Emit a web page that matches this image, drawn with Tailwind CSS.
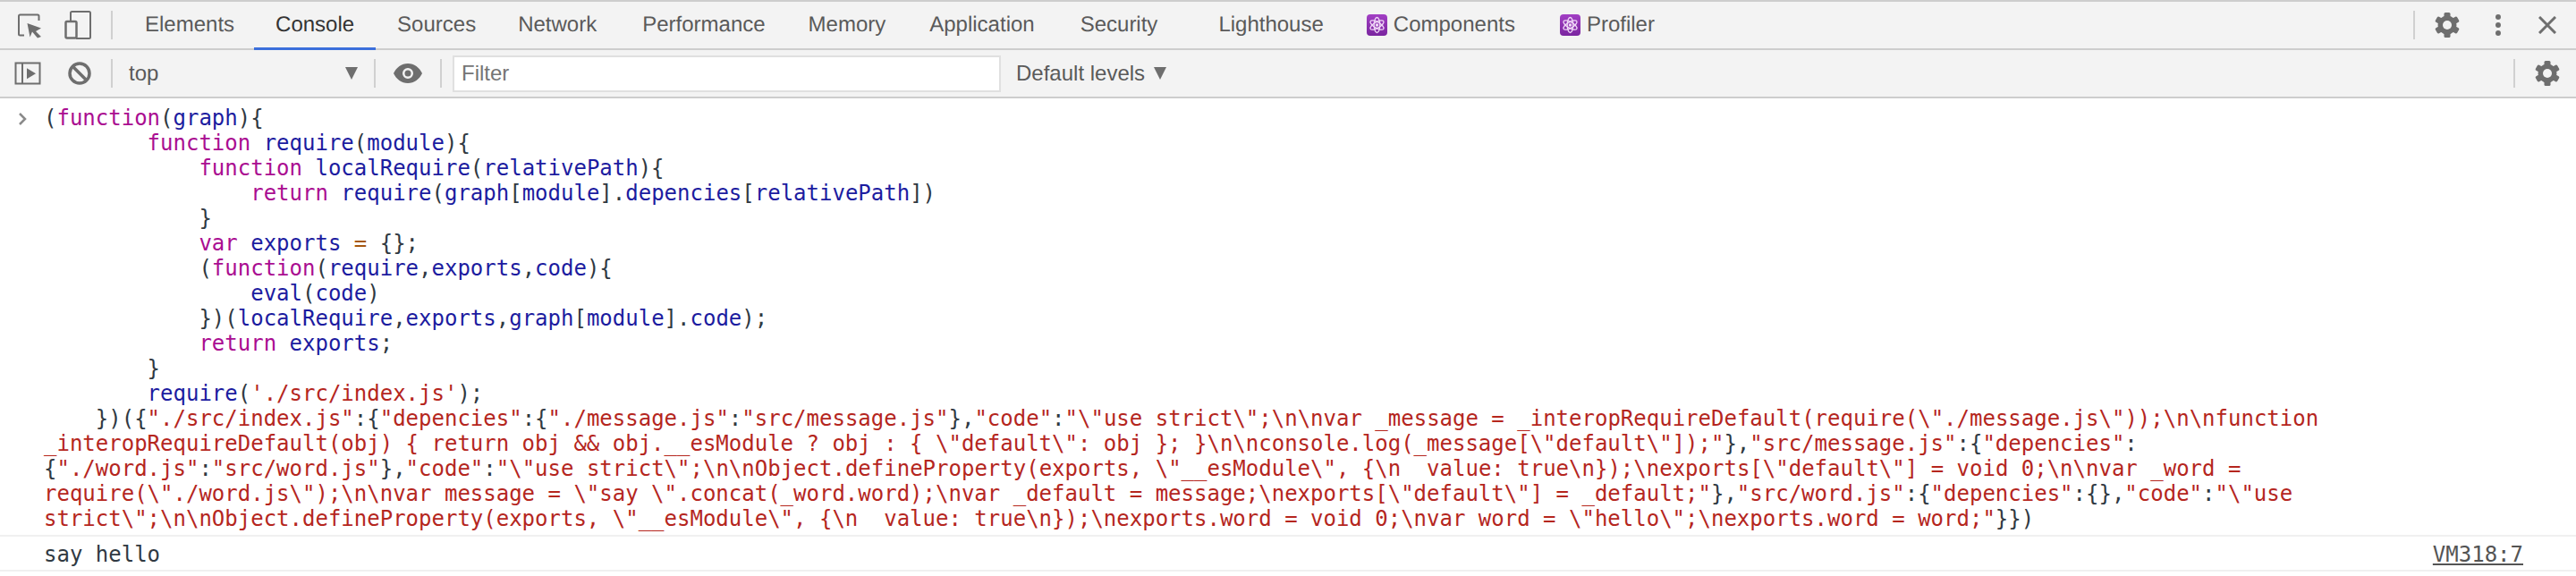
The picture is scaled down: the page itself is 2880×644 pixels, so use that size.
<!DOCTYPE html>
<html><head><meta charset="utf-8"><script src="https://cdn.jsdelivr.net/npm/@tailwindcss/browser@4"></script></head>
<body class="bg-white w-[2880px] h-[644px] overflow-hidden font-['Liberation_Sans',Arial,sans-serif]">
<div class="flex h-[56px] items-center bg-[#f3f3f3] border-y-[2px] border-[#cdcdcd] text-[24px] text-[#5a5a5a]">
  <svg class="w-[27px] h-[29px] ml-[20px] shrink-0" viewBox="20 14 27 29" fill="none"><path d="M27 39.500h-4.500a1.500 1.500 0 0 1-1.500-1.500V18a1.500 1.500 0 0 1 1.500-1.500h19.500a1.500 1.500 0 0 1 1.500 1.500v5" stroke="#6e6e6e" stroke-width="2"/><path d="M30.500 26l15.500 5.500-6 3.500 6 6-4 1.500-6-7-2.500 6z" fill="#6e6e6e"/></svg>
  <svg class="w-[30px] h-[32px] ml-[25px] shrink-0" viewBox="72 12 30 32" fill="none"><path d="M79 23v-8.500a1.500 1.500 0 0 1 1.500-1.500h19a1.500 1.500 0 0 1 1.500 1.500v27a1.500 1.500 0 0 1-1.500 1.500H85" stroke="#6e6e6e" stroke-width="2"/><rect x="73.500" y="24" width="12" height="18.500" rx="1.500" stroke="#6e6e6e" stroke-width="2.500"/></svg>
  <div class="w-[2px] h-[32px] bg-[#d0d0d0] ml-[22px] shrink-0"></div>
  <div class="flex h-full items-center pl-[12px] [text-rendering:geometricPrecision]">
    <span class="px-[24px]">Elements</span>
    <span class="relative ml-[-2px] px-[24px] h-full flex items-center text-[#333]">Console<span class="absolute left-0 right-0 bottom-[-2px] h-[3px] bg-[#3b6fdb]"></span></span>
    <span class="px-[24px]">Sources</span>
    <span class="ml-[-1px] px-[24px]">Network</span>
    <span class="ml-[3px] px-[24px]">Performance</span>
    <span class="px-[24px]">Memory</span>
    <span class="ml-[1px] px-[24px]">Application</span>
    <span class="ml-[3px] px-[24px]">Security</span>
    <span class="px-[24px] ml-[20px]">Lighthouse</span>
    <span class="flex items-center gap-[7px] px-[24px]">
      <svg class="w-[23px] h-[24px]" viewBox="0 0 23 24"><defs><linearGradient id="r1" x1="0" y1="0" x2="0" y2="1"><stop offset="0" stop-color="#a23fc4"/><stop offset="1" stop-color="#7a259f"/></linearGradient></defs><rect width="23" height="24" rx="4" fill="url(#r1)"/><g fill="none" stroke="#f0d8f7" stroke-width="1.300"><ellipse cx="11.500" cy="12" rx="8.500" ry="3.300" transform="rotate(30 11.500 12)"/><ellipse cx="11.500" cy="12" rx="8.500" ry="3.300" transform="rotate(90 11.500 12)"/><ellipse cx="11.500" cy="12" rx="8.500" ry="3.300" transform="rotate(150 11.500 12)"/></g><circle cx="11.500" cy="12" r="1.800" fill="#f0d8f7"/></svg>
      Components</span>
    <span class="ml-[2px] flex items-center gap-[7px] px-[24px]">
      <svg class="w-[23px] h-[24px]" viewBox="0 0 23 24"><rect width="23" height="24" rx="4" fill="url(#r1)"/><g fill="none" stroke="#f0d8f7" stroke-width="1.300"><ellipse cx="11.500" cy="12" rx="8.500" ry="3.300" transform="rotate(30 11.500 12)"/><ellipse cx="11.500" cy="12" rx="8.500" ry="3.300" transform="rotate(90 11.500 12)"/><ellipse cx="11.500" cy="12" rx="8.500" ry="3.300" transform="rotate(150 11.500 12)"/></g><circle cx="11.500" cy="12" r="1.800" fill="#f0d8f7"/></svg>
      Profiler</span>
  </div>
  <div class="ml-auto flex items-center h-full">
    <div class="w-[2px] h-[32px] bg-[#d0d0d0]"></div>
    <svg class="w-[28px] h-[28px] ml-[22px]" viewBox="0 0 28 28"><circle cx="14" cy="14" r="10.500" fill="#6e6e6e"/><g fill="#6e6e6e"><rect x="10.500" y="0" width="7" height="28" rx="1.500"/><rect x="10.500" y="0" width="7" height="28" rx="1.500" transform="rotate(60 14 14)"/><rect x="10.500" y="0" width="7" height="28" rx="1.500" transform="rotate(120 14 14)"/></g><circle cx="14" cy="14" r="5" fill="#f3f3f3"/></svg>
    <svg class="w-[10px] h-[26px] ml-[38px]" viewBox="0 0 10 26" fill="#6e6e6e"><circle cx="5" cy="4" r="3"/><circle cx="5" cy="13" r="3"/><circle cx="5" cy="22" r="3"/></svg>
    <svg class="w-[20px] h-[20px] ml-[40px] mr-[22px]" viewBox="0 0 20 20" stroke="#6e6e6e" stroke-width="3"><path d="M1 1l18 18M19 1L1 19"/></svg>
  </div>
</div>
<div class="flex h-[54px] items-center bg-[#f3f3f3] border-b-[2px] border-[#cdcdcd] text-[24px] text-[#5a5a5a]">
  <svg class="w-[30px] h-[26px] ml-[16px] shrink-0" viewBox="16 70 30 26" fill="none"><rect x="17.500" y="71.500" width="27" height="23" stroke="#6e6e6e" stroke-width="2"/><path d="M25 71v24" stroke="#6e6e6e" stroke-width="2"/><path d="M30 77.300l10 6-10 6z" fill="#6e6e6e"/></svg>
  <svg class="w-[26px] h-[26px] ml-[30px] shrink-0" viewBox="0 0 26 26" fill="none" stroke="#6e6e6e" stroke-width="3.500"><circle cx="13" cy="13" r="11"/><path d="M5 5l16 16"/></svg>
  <div class="w-[2px] h-[32px] bg-[#d0d0d0] ml-[22px] shrink-0"></div>
  <div class="w-[292px] flex items-center justify-between pl-[18px] pr-[18px] shrink-0"><span>top</span><span class="w-0 h-0 border-l-[7px] border-r-[7px] border-t-[14px] border-l-transparent border-r-transparent border-t-[#6e6e6e]"></span></div>
  <div class="w-[2px] h-[32px] bg-[#d0d0d0] shrink-0"></div>
  <svg class="w-[32px] h-[22px] ml-[20px] shrink-0" viewBox="0 0 32 22"><path fill-rule="evenodd" fill="#6e6e6e" d="M16 0C9 0 3 4.500 0 11c3 6.500 9 11 16 11s13-4.500 16-11C29 4.500 23 0 16 0zm0 17a6 6 0 1 1 0-12 6 6 0 0 1 0 12z"/><circle cx="16" cy="11" r="3.500" fill="#6e6e6e"/></svg>
  <div class="w-[2px] h-[32px] bg-[#d0d0d0] ml-[20px] shrink-0"></div>
  <div class="w-[613px] h-[41px] ml-[12px] bg-white border-[2px] border-[#e0e0e0] px-[8px] flex items-center text-[#757575] shrink-0">Filter</div>
  <span class="ml-[17px]">Default levels</span><span class="ml-[10px] w-0 h-0 border-l-[7px] border-r-[7px] border-t-[14px] border-l-transparent border-r-transparent border-t-[#6e6e6e]"></span>
  <div class="ml-auto flex items-center">
    <div class="w-[2px] h-[32px] bg-[#d0d0d0]"></div>
    <svg class="w-[28px] h-[28px] ml-[22px] mr-[18px]" viewBox="0 0 28 28"><circle cx="14" cy="14" r="10.500" fill="#6e6e6e"/><g fill="#6e6e6e"><rect x="10.500" y="0" width="7" height="28" rx="1.500"/><rect x="10.500" y="0" width="7" height="28" rx="1.500" transform="rotate(60 14 14)"/><rect x="10.500" y="0" width="7" height="28" rx="1.500" transform="rotate(120 14 14)"/></g><circle cx="14" cy="14" r="5" fill="#f3f3f3"/></svg>
  </div>
</div>
<div class="relative flex flex-col pl-[49px] pt-[8px] font-['DejaVu_Sans_Mono',monospace] text-[24px] leading-[28px] text-[#303942] whitespace-pre">
<svg class="absolute left-[20px] top-[16px] w-[10px] h-[14px]" viewBox="0 0 10 14" fill="none" stroke="#8a8a8a" stroke-width="2.500"><path d="M2 1l6 6-6 6"/></svg>
<div>(<span class="text-[#aa0d91]">function</span>(<span class="text-[#1c1ca0]">graph</span>){</div>
<div>        <span class="text-[#aa0d91]">function</span> <span class="text-[#1c1ca0]">require</span>(<span class="text-[#1c1ca0]">module</span>){</div>
<div>            <span class="text-[#aa0d91]">function</span> <span class="text-[#1c1ca0]">localRequire</span>(<span class="text-[#1c1ca0]">relativePath</span>){</div>
<div>                <span class="text-[#aa0d91]">return</span> <span class="text-[#1c1ca0]">require</span>(<span class="text-[#1c1ca0]">graph</span>[<span class="text-[#1c1ca0]">module</span>].<span class="text-[#1c1ca0]">depencies</span>[<span class="text-[#1c1ca0]">relativePath</span>])</div>
<div>            }</div>
<div>            <span class="text-[#aa0d91]">var</span> <span class="text-[#1c1ca0]">exports</span> <span class="text-[#a5570f]">=</span> {};</div>
<div>            (<span class="text-[#aa0d91]">function</span>(<span class="text-[#1c1ca0]">require</span>,<span class="text-[#1c1ca0]">exports</span>,<span class="text-[#1c1ca0]">code</span>){</div>
<div>                <span class="text-[#1c1ca0]">eval</span>(<span class="text-[#1c1ca0]">code</span>)</div>
<div>            })(<span class="text-[#1c1ca0]">localRequire</span>,<span class="text-[#1c1ca0]">exports</span>,<span class="text-[#1c1ca0]">graph</span>[<span class="text-[#1c1ca0]">module</span>].<span class="text-[#1c1ca0]">code</span>);</div>
<div>            <span class="text-[#aa0d91]">return</span> <span class="text-[#1c1ca0]">exports</span>;</div>
<div>        }</div>
<div>        <span class="text-[#1c1ca0]">require</span>(<span class="text-[#b5261e]">'./src/index.js'</span>);</div>
<div>    })({<span class="text-[#b5261e]">"./src/index.js"</span>:{<span class="text-[#b5261e]">"depencies"</span>:{<span class="text-[#b5261e]">"./message.js"</span>:<span class="text-[#b5261e]">"src/message.js"</span>},<span class="text-[#b5261e]">"code"</span>:<span class="text-[#b5261e]">"\"use strict\";\n\nvar _message = _interopRequireDefault(require(\"./message.js\"));\n\nfunction</span></div>
<div class="text-[#b5261e]">_interopRequireDefault(obj) { return obj &amp;&amp; obj.__esModule ? obj : { \"default\": obj }; }\n\nconsole.log(_message[\"default\"]);"<span class="text-[#303942]">},</span>"src/message.js"<span class="text-[#303942]">:{</span>"depencies"<span class="text-[#303942]">:</span></div>
<div><span>{</span><span class="text-[#b5261e]">"./word.js"</span>:<span class="text-[#b5261e]">"src/word.js"</span>},<span class="text-[#b5261e]">"code"</span>:<span class="text-[#b5261e]">"\"use strict\";\n\nObject.defineProperty(exports, \"__esModule\", {\n  value: true\n});\nexports[\"default\"] = void 0;\n\nvar _word =</span></div>
<div class="text-[#b5261e]">require(\"./word.js\");\n\nvar message = \"say \".concat(_word.word);\nvar _default = message;\nexports[\"default\"] = _default;"<span class="text-[#303942]">},</span>"src/word.js"<span class="text-[#303942]">:{</span>"depencies"<span class="text-[#303942]">:{},</span>"code"<span class="text-[#303942]">:</span>"\"use</div>
<div><span class="text-[#b5261e]">strict\";\n\nObject.defineProperty(exports, \"__esModule\", {\n  value: true\n});\nexports.word = void 0;\nvar word = \"hello\";\nexports.word = word;"</span>}})</div>
</div>
<div class="mt-[4px] h-[41px] pt-[2px] border-y-[2px] border-[#f0f0f0] pl-[49px] flex items-center justify-between pr-[59px] font-['DejaVu_Sans_Mono',monospace] text-[24px] text-[#303942]"><span>say hello</span><span class="underline text-[#545454]">VM318:7</span></div>
</body></html>
